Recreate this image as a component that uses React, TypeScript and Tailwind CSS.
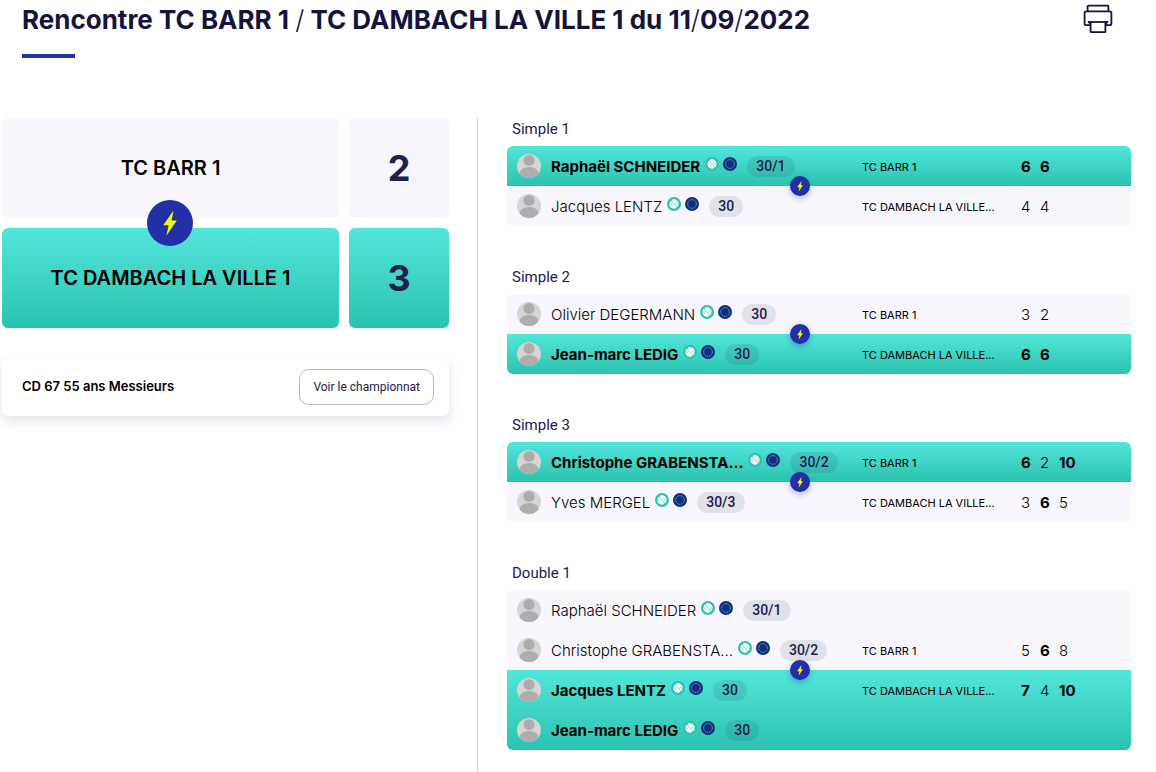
import clsx from "clsx";

type Player = {
  name: string;
  ranking: string;
};

type Score = {
  value: string;
  won: boolean;
};

type Side = {
  team: string;
  winner: boolean;
  players: Player[];
  scores: Score[];
};

type Match = {
  title: string;
  sides: [Side, Side];
};

const BARR = "TC BARR 1";
const DAMBACH = "TC DAMBACH LA VILLE...";

const won = (value: string): Score => ({ value, won: true });
const lost = (value: string): Score => ({ value, won: false });

const matches: Match[] = [
  {
    title: "Simple 1",
    sides: [
      { team: BARR, winner: true, players: [{ name: "Raphaël SCHNEIDER", ranking: "30/1" }], scores: [won("6"), won("6")] },
      { team: DAMBACH, winner: false, players: [{ name: "Jacques LENTZ", ranking: "30" }], scores: [lost("4"), lost("4")] },
    ],
  },
  {
    title: "Simple 2",
    sides: [
      { team: BARR, winner: false, players: [{ name: "Olivier DEGERMANN", ranking: "30" }], scores: [lost("3"), lost("2")] },
      { team: DAMBACH, winner: true, players: [{ name: "Jean-marc LEDIG", ranking: "30" }], scores: [won("6"), won("6")] },
    ],
  },
  {
    title: "Simple 3",
    sides: [
      { team: BARR, winner: true, players: [{ name: "Christophe GRABENSTA...", ranking: "30/2" }], scores: [won("6"), lost("2"), won("10")] },
      { team: DAMBACH, winner: false, players: [{ name: "Yves MERGEL", ranking: "30/3" }], scores: [lost("3"), won("6"), lost("5")] },
    ],
  },
  {
    title: "Double 1",
    sides: [
      {
        team: BARR,
        winner: false,
        players: [
          { name: "Raphaël SCHNEIDER", ranking: "30/1" },
          { name: "Christophe GRABENSTA...", ranking: "30/2" },
        ],
        scores: [lost("5"), won("6"), lost("8")],
      },
      {
        team: DAMBACH,
        winner: true,
        players: [
          { name: "Jacques LENTZ", ranking: "30" },
          { name: "Jean-marc LEDIG", ranking: "30" },
        ],
        scores: [won("7"), lost("4"), won("10")],
      },
    ],
  },
];

function Bolt({ className }: { className?: string }) {
  return (
    <svg viewBox="0 0 14 25" className={className} fill="#eaff00" aria-hidden="true">
      <path d="M10 0.3 0.2 14.2H5.6L3.4 24.7 13.8 9.6H8.6L10.4 0.5Z" />
    </svg>
  );
}

function Printer() {
  return (
    <svg viewBox="0 0 30 30" className="h-[30px] w-[30px]" fill="none" stroke="#14143c" strokeWidth="1.8" aria-hidden="true">
      <path d="M4.6 7.4V2.4Q4.6 1.6 5.4 1.6H24.6Q25.4 1.6 25.4 2.4V7.4" />
      <path d="M7.4 21.2H3.4Q1.6 21.2 1.6 19.4V9.2Q1.6 7.4 3.4 7.4H26.6Q28.4 7.4 28.4 9.2V19.4Q28.4 21.2 26.6 21.2H22.6" />
      <path d="M4.8 18H25.2" />
      <path d="M4.8 17.2H7.6V21H6.6ZM25.2 17.2H22.4V21H23.4Z" fill="#14143c" stroke="none" />
      <path d="M7.6 18V27.4Q7.6 28.2 8.4 28.2H21.6Q22.4 28.2 22.4 27.4V18" />
    </svg>
  );
}

function Avatar() {
  return (
    <svg viewBox="0 0 24 24" className="h-6 w-6 shrink-0" aria-hidden="true">
      <clipPath id="avatar-clip">
        <circle cx="12" cy="12" r="12" />
      </clipPath>
      <g clipPath="url(#avatar-clip)">
        <rect width="24" height="24" fill="#d5d5d6" />
        <circle cx="12" cy="6.4" r="5.5" fill="#adadae" />
        <path d="M2.6 24V19.6Q3.2 13 12 13T21.4 19.6V24Z" fill="#adadae" />
      </g>
    </svg>
  );
}

function BallIcon() {
  return (
    <svg viewBox="0 0 14 14" className="h-3.5 w-3.5" aria-hidden="true">
      <circle cx="7" cy="7" r="7" fill="#35bfad" />
      <circle cx="7" cy="7" r="4.7" fill="#fff" />
      <path
        d="M4.4 3C4.4 5.4 5.8 6.2 7 7S9.6 8.6 9.6 11M2.6 5.4C3.2 7.4 4.4 7.8 5.4 8.6M11.4 8.6C10.8 6.6 9.6 6.2 8.6 5.4"
        fill="none"
        stroke="#55c9ba"
        strokeWidth="0.9"
      />
    </svg>
  );
}

function StarsIcon() {
  return (
    <svg viewBox="0 0 14 14" className="h-3.5 w-3.5" aria-hidden="true">
      <circle cx="7" cy="7" r="7" fill="#0c3083" />
      <circle cx="7" cy="7" r="4.3" fill="none" stroke="#a3a78c" strokeWidth="1" strokeDasharray="1.25 1" />
    </svg>
  );
}

function TeamBox({ name, score, winner }: { name: string; score: number; winner?: boolean }) {
  const tone = winner ? "bg-linear-to-b from-[#52e5da] to-[#2ac3b0]" : "bg-[#f6f6fc]";
  return (
    <div className="flex gap-2.5">
      <div className={clsx("flex h-[100px] flex-1 items-center justify-center rounded-md text-xl font-semibold text-black", tone)}>
        {name}
      </div>
      <div className={clsx("flex h-[100px] w-[100px] items-center justify-center rounded-md text-4xl font-bold text-[#20204a]", tone)}>
        {score}
      </div>
    </div>
  );
}

function PlayerRow({ player, side, showResult }: { player: Player; side: Side; showResult: boolean }) {
  return (
    <li className="grid h-10 grid-cols-[355fr_159fr_110fr] items-center">
      <div className="flex items-center pl-2.5">
        <Avatar />
        <span className={clsx("ml-2.5 pt-0.5 text-[15px] whitespace-nowrap text-black", side.winner ? "font-bold" : "font-light")}>
          {player.name}
        </span>
        <span className="mb-1 ml-[5px] flex gap-1">
          <BallIcon />
          <StarsIcon />
        </span>
        <span
          className={clsx(
            "ml-2.5 rounded-full px-[9px] font-[Roboto] text-sm leading-[21px] font-medium text-[#20204a]",
            side.winner ? "bg-[#20204a]/10" : "bg-[#e1e1ea]",
          )}
        >
          {player.ranking}
        </span>
      </div>
      {showResult ? (
        <>
          <span className="pt-0.5 text-[11px] text-black">{side.team}</span>
          <span className="flex pt-0.5 text-[15px] text-black">
            {side.scores.map((score, i) => (
              <span key={i} className={clsx("w-[19px]", score.won ? "font-bold" : "font-light")}>
                {score.value}
              </span>
            ))}
          </span>
        </>
      ) : null}
    </li>
  );
}

function MatchCard({ match }: { match: Match }) {
  return (
    <section>
      <h2 className="mb-1.5 pl-[5px] font-[Roboto] text-[15px] leading-[22px] text-[#20204a]">{match.title}</h2>
      <div>
        {match.sides.map((side, s) => (
          <div
            key={s}
            className={clsx(
              "relative",
              s === 0 ? "rounded-t-md" : "rounded-b-md",
              side.winner ? "bg-linear-to-b from-[#52e5da] to-[#2ac3b0]" : "bg-[#f6f6fc]",
            )}
          >
            <ul>
              {side.players.map((player, p) => (
                <PlayerRow
                  key={player.name}
                  player={player}
                  side={side}
                  showResult={s === 0 ? p === side.players.length - 1 : p === 0}
                />
              ))}
            </ul>
            {s === 1 ? (
              <span className="absolute -top-2.5 left-[47%] flex h-5 w-5 -translate-x-1/2 items-center justify-center rounded-full bg-[#222fa5] shadow-[0_2px_6px_rgba(34,47,165,0.35)]">
                <Bolt className="h-[11px]" />
              </span>
            ) : null}
          </div>
        ))}
      </div>
    </section>
  );
}

export default function App() {
  return (
    <div className="flex min-h-screen flex-col bg-white font-[Inter,sans-serif]">
      <header className="flex items-start justify-between pr-[43px] pl-[22px]">
        <div>
          <h1 className="text-[26px] leading-10 font-bold text-[#14143c]">
            Rencontre TC BARR 1 <span className="font-light">/</span> TC DAMBACH LA VILLE 1 du 11
            <span className="font-light">/</span>09<span className="font-light">/</span>2022
          </h1>
          <div className="mt-3.5 h-1 w-[53px] bg-[#222fa5]" />
        </div>
        <button type="button" aria-label="Imprimer" className="mt-1 cursor-pointer">
          <Printer />
        </button>
      </header>

      <main className="mt-[60px] grid flex-1 grid-cols-[475fr_654fr] pr-[25px] pl-0.5">
        <div className="pr-7">
          <div className="relative flex flex-col gap-2.5">
            <TeamBox name="TC BARR 1" score={2} />
            <TeamBox name="TC DAMBACH LA VILLE 1" score={3} winner />
            <div className="pointer-events-none absolute inset-0 flex items-center pr-28">
              <span className="mx-auto flex h-[46px] w-[46px] items-center justify-center rounded-full bg-[#222fa5]">
                <Bolt className="h-[25px]" />
              </span>
            </div>
          </div>

          <div className="mt-[30px] flex h-[58px] items-center justify-between rounded-md bg-white pr-[15px] pl-5 shadow-[0_5px_12px_rgba(32,32,90,0.13)]">
            <p className="text-[13px] font-semibold text-black">CD 67 55 ans Messieurs</p>
            <button
              type="button"
              className="h-9 cursor-pointer rounded-[10px] border border-[#b9b9c4] px-[13px] font-[Roboto] text-xs text-[#20204a]"
            >
              Voir le championnat
            </button>
          </div>
        </div>

        <div className="flex flex-col gap-10 border-l border-[#d5d5da] pl-[29px]">
          {matches.map((match) => (
            <MatchCard key={match.title} match={match} />
          ))}
        </div>
      </main>
    </div>
  );
}
